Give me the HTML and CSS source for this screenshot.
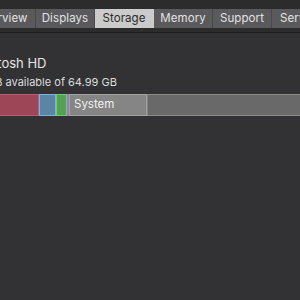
FILE: index.html
```html
<!DOCTYPE html>
<html>
<head>
<meta charset="utf-8">
<link rel="stylesheet" href="styles.css">
</head>
<body>
<div class="titlebar">
  <div class="tabs">
    <div class="tab first">Overview</div>
    <div class="tab">Displays</div>
    <div class="tab selected">Storage</div>
    <div class="tab">Memory</div>
    <div class="tab">Support</div>
    <div class="tab">Service</div>
  </div>
</div>
<div class="content">
  <div class="disk">
    <div class="name">Macintosh HD</div>
    <div class="avail">21.34 GB available of 64.99 GB</div>
  </div>
  <div class="bar">
    <div class="seg red"></div>
    <div class="seg blue"></div>
    <div class="seg green"></div>
    <div class="seg purple"></div>
    <div class="seg system">System</div>
    <div class="seg free"></div>
  </div>
</div>
</body>
</html>
```
FILE: styles.css
```css
html, body {
  margin: 0;
  padding: 0;
  background: #323234;
  font-family: Inter, "Noto Sans", sans-serif;
  overflow: hidden;
}
.titlebar {
  height: 33px;
  background: #2c2c2d;
  border-bottom: 1px solid #1f1f20;
  box-sizing: border-box;
  padding-top: 9px;
}
.tabs {
  display: flex;
  margin-left: -28px;
  height: 19px;
}
.tab {
  flex: 0 0 59px;
  height: 19px;
  line-height: 19px;
  text-align: center;
  font-size: 11.5px;
  color: #e2e2e2;
  background: #5a5a5c;
  border-right: 1px solid #48484a;
  box-sizing: border-box;
  white-space: nowrap;
  letter-spacing: 0.1px;
}
.tab.first {
  flex-basis: 64px;
  text-indent: -4px;
}
.tab.selected {
  background: #cbcbcb;
  color: #2a2a2a;
  border-right-color: #cbcbcb;
}
.content {
  padding-top: 22px;
}
.disk {
  color: #e6e6e6;
}
.name {
  font-size: 13px;
  line-height: 16px;
  margin-left: -40px;
}
.avail {
  font-size: 11px;
  line-height: 14px;
  margin-top: 4px;
  margin-left: -44px;
  color: #dcdcdc;
}
.bar {
  display: flex;
  height: 22px;
  margin-top: 5px;
}
.seg {
  box-sizing: border-box;
  height: 22px;
}
.red {
  width: 39px;
  background: #9d4658;
  border: 1px solid #bd5d72;
  border-left: none;
}
.blue {
  width: 17px;
  background: #5a85a4;
  border: 1px solid #7eb3de;
}
.green {
  width: 11px;
  background: #55a054;
  border: 1px solid #72cd6c;
}
.purple {
  width: 2px;
  background: #9a7ac8;
}
.system {
  width: 78px;
  background: #858585;
  border: 1px solid #a2a2a2;
  color: #f0f0f0;
  font-size: 11.5px;
  line-height: 19px;
  padding-left: 4px;
}
.free {
  flex: 1;
  background: #696969;
  border-top: 1px solid #8a8a8a;
  border-bottom: 1px solid #8a8a8a;
  border-left: 1px solid #858585;
}
```
